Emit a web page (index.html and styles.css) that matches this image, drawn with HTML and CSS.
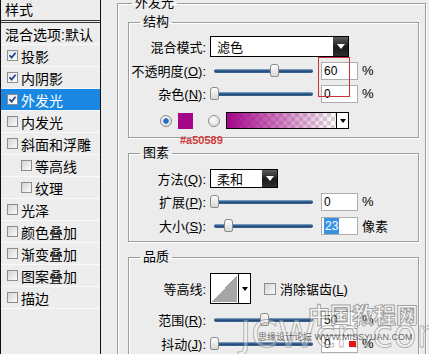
FILE: index.html
```html
<!DOCTYPE html>
<html lang="zh-CN">
<head>
    <meta charset="UTF-8">
    <meta name="viewport" content="width=device-width, initial-scale=1.0">
    <title>图层样式 - 外发光</title>
    <link rel="stylesheet" href="styles.css">
</head>
<body>
    <div class="dialog">
        <div class="sidebar">
            <div class="side-title">样式</div>
            <div class="side-item plain">混合选项:默认</div>
            <div class="side-item"><span class="check on"><svg viewBox="0 0 9 9"><path d="M1.5 4.2 L3.6 6.6 L7.6 1.8"/></svg></span>投影</div>
            <div class="side-item"><span class="check on"><svg viewBox="0 0 9 9"><path d="M1.5 4.2 L3.6 6.6 L7.6 1.8"/></svg></span>内阴影</div>
            <div class="side-item active"><span class="check on"><svg viewBox="0 0 9 9"><path d="M1.5 4.2 L3.6 6.6 L7.6 1.8"/></svg></span>外发光</div>
            <div class="side-item"><span class="check"></span>内发光</div>
            <div class="side-item"><span class="check"></span>斜面和浮雕</div>
            <div class="side-item sub"><span class="check"></span>等高线</div>
            <div class="side-item sub"><span class="check"></span>纹理</div>
            <div class="side-item"><span class="check"></span>光泽</div>
            <div class="side-item"><span class="check"></span>颜色叠加</div>
            <div class="side-item"><span class="check"></span>渐变叠加</div>
            <div class="side-item"><span class="check"></span>图案叠加</div>
            <div class="side-item"><span class="check"></span>描边</div>
        </div>

        <div class="main">
            <fieldset class="group outer">
                <legend>外发光</legend>

                <fieldset class="group structure">
                    <legend>结构</legend>
                    <div class="row">
                        <span class="label">混合模式:</span>
                        <div class="select wide"><span class="select-text">滤色</span><span class="select-btn"><i class="arrow-white"></i></span></div>
                    </div>
                    <div class="slider-rows">
                        <div class="row">
                            <span class="label">不透明度(<u>O</u>):</span>
                            <div class="slider"><span class="track"></span><span class="thumb" style="left: 60px"></span></div>
                            <span class="field">60</span>
                            <span class="unit">%</span>
                        </div>
                        <div class="row">
                            <span class="label">杂色(<u>N</u>):</span>
                            <div class="slider"><span class="track"></span><span class="thumb" style="left: 0px"></span></div>
                            <span class="field">0</span>
                            <span class="unit">%</span>
                        </div>
                        <span class="mark-box"></span>
                    </div>
                    <div class="color-row">
                        <span class="radio on"></span>
                        <span class="swatch"></span>
                        <span class="radio"></span>
                        <div class="gradient"><span class="gradient-fill"></span><span class="drop"><i class="arrow-black"></i></span></div>
                        <span class="hex-note">#a50589</span>
                    </div>
                </fieldset>

                <fieldset class="group elements">
                    <legend>图素</legend>
                    <div class="row">
                        <span class="label">方法(<u>Q</u>):</span>
                        <div class="select narrow"><span class="select-text">柔和</span><span class="select-btn"><i class="arrow-white"></i></span></div>
                    </div>
                    <div class="row gap-a">
                        <span class="label">扩展(<u>P</u>):</span>
                        <div class="slider"><span class="track"></span><span class="thumb" style="left: 0px"></span></div>
                        <span class="field">0</span>
                        <span class="unit">%</span>
                    </div>
                    <div class="row gap-b">
                        <span class="label">大小(<u>S</u>):</span>
                        <div class="slider"><span class="track"></span><span class="thumb" style="left: 14px"></span></div>
                        <span class="field"><span class="selected">23</span></span>
                        <span class="unit">像素</span>
                    </div>
                </fieldset>

                <fieldset class="group quality">
                    <legend>品质</legend>
                    <div class="row">
                        <span class="label">等高线:</span>
                        <div class="contour"><span class="contour-preview"></span><span class="drop"><i class="arrow-black"></i></span></div>
                        <span class="check"></span>
                        <span class="check-label">消除锯齿(<u>L</u>)</span>
                    </div>
                    <div class="row gap-c">
                        <span class="label">范围(<u>R</u>):</span>
                        <div class="slider"><span class="track"></span><span class="thumb" style="left: 50px"></span></div>
                        <span class="field">50</span>
                        <span class="unit">%</span>
                    </div>
                    <div class="row gap-b">
                        <span class="label">抖动(<u>J</u>):</span>
                        <div class="slider"><span class="track"></span><span class="thumb" style="left: 0px"></span></div>
                        <span class="field">0</span>
                        <span class="unit">%</span>
                    </div>
                </fieldset>
            </fieldset>
        </div>

        <!-- site watermark over the corner -->
        <div class="wm-cn">中国教程网</div>
        <div class="wm-en">JCWcn.com</div>
        <div class="wm-site">思缘设计论坛 WWW.MISSYUAN.COM</div>
        <span class="wm-dot"></span>
    </div>
</body>
</html>
```

FILE: styles.css
```css
html, body {
    margin: 0;
    padding: 0;
}
body {
    font-family: "Liberation Sans", "Noto Sans CJK SC", sans-serif;
    font-size: 13px;
    color: #000;
    background-color: #ececec;
    width: 429px;
    height: 354px;
    overflow: hidden;
}
.dialog {
    position: relative;
    display: flex;
    height: 354px;
    overflow: hidden;
}

/* left style list */
.sidebar {
    width: 99px;
    flex: none;
    border-left: 1px solid #111;
    border-right: 1px solid #111;
    background-color: #ededed;
    font-size: 14px;
}
.side-title {
    height: 20px;
    line-height: 20px;
    padding-left: 4px;
    border-bottom: 3px double #333;
}
.side-item {
    display: flex;
    align-items: center;
    height: 21px;
    padding-left: 6px;
    border-bottom: 1px solid #f9f9f9;
    white-space: nowrap;
}
.side-item.plain {
    padding-left: 4px;
}
.side-item.sub {
    padding-left: 20px;
}
.side-item.active {
    background-color: #1a88e2;
    color: #fff;
}
.check {
    display: inline-flex;
    flex: none;
    width: 11px;
    height: 11px;
    box-sizing: border-box;
    margin-right: 3px;
    border: 1px solid #8d8d8d;
    background: linear-gradient(135deg, #d4d4d4, #fbfbfb);
}
.check.on {
    background: linear-gradient(135deg, #e6e6e6, #fff);
}
.check svg {
    width: 9px;
    height: 9px;
}
.check path {
    fill: none;
    stroke: #24408e;
    stroke-width: 1.7;
}

/* right panel */
.main {
    flex: 1;
    padding: 0 3px 0 16px;
}
.group {
    margin: 0;
    padding: 0;
    min-width: 0;
    border: 1px solid #9c9c9c;
    box-shadow: inset 1px 1px 0 #fff, 1px 1px 0 #fff;
}
.group legend {
    margin-left: 11px;
    padding: 0 3px;
    font-size: 13px;
    line-height: 14px;
    height: 14px;
}
.outer {
    margin-top: -4px;
    padding: 0 6px 0 10px;
    height: 400px;
}
.outer > legend {
    margin-left: 4px;
}
.structure {
    margin-top: 5px;
    padding: 7px 0 8px;
}
.elements {
    margin-top: 8px;
    padding: 9px 0 6px;
}
.quality {
    margin-top: 8px;
    padding: 9px 0 10px;
}

.row {
    display: flex;
    align-items: center;
    white-space: nowrap;
}
.slider-rows {
    position: relative;
    display: flex;
    flex-direction: column;
    gap: 4px;
    margin-top: 4px;
}
.gap-a {
    margin-top: 4px;
}
.gap-b {
    margin-top: 5px;
}
.gap-c {
    margin-top: 6px;
}
.label {
    width: 77px;
    margin-right: 4px;
    text-align: right;
    flex: none;
}

.select {
    display: flex;
    box-sizing: border-box;
    border: 1px solid #000;
    background-color: #fff;
}
.select.wide {
    width: 139px;
    height: 21px;
}
.select.narrow {
    width: 68px;
    height: 19px;
}
.select-text {
    flex: 1;
    padding-left: 6px;
    display: flex;
    align-items: center;
}
.select-btn {
    width: 15px;
    display: flex;
    align-items: center;
    justify-content: center;
    background: linear-gradient(#5c5c5c, #1a1a1a 55%, #2e2e2e);
}
.arrow-white {
    width: 0;
    height: 0;
    border-left: 4px solid transparent;
    border-right: 4px solid transparent;
    border-top: 5px solid #fff;
}
.arrow-black {
    width: 0;
    height: 0;
    border-left: 3px solid transparent;
    border-right: 3px solid transparent;
    border-top: 4px solid #000;
}

.slider {
    position: relative;
    width: 104px;
    height: 14px;
    margin-right: 7px;
    flex: none;
}
.track {
    position: absolute;
    left: 4px;
    right: 1px;
    top: 5px;
    height: 4px;
    border-radius: 2px;
    background: linear-gradient(#8fb6dc, #1f4372 50%, #3d6b9c);
}
.thumb {
    position: absolute;
    top: 0;
    width: 9px;
    height: 13px;
    box-sizing: border-box;
    border: 1px solid #8b8b8b;
    border-radius: 3px 3px 2px 2px;
    background: linear-gradient(#fdfdfd, #d8d8d8);
}
.field {
    display: flex;
    align-items: center;
    width: 37px;
    height: 18px;
    box-sizing: border-box;
    padding-left: 2px;
    border: 1px solid #adadad;
    background-color: #fff;
    font-size: 12px;
    flex: none;
}
.selected {
    background-color: #3892e4;
    color: #fff;
    padding: 1px 1px;
}
.unit {
    margin-left: 4px;
}

/* colour choice */
.color-row {
    position: relative;
    display: flex;
    align-items: center;
    margin-top: 9px;
    padding-left: 31px;
    height: 17px;
}
.radio {
    width: 12px;
    height: 12px;
    box-sizing: border-box;
    border-radius: 50%;
    border: 1px solid #8e8e8e;
    background: radial-gradient(circle at 40% 35%, #ffffff, #d2d2d2);
    flex: none;
}
.radio.on {
    background:
        radial-gradient(circle, #2a6cc0 0 2.4px, #9cc4ec 2.8px, transparent 3.4px),
        radial-gradient(circle at 40% 35%, #ffffff, #d2d2d2);
}
.swatch {
    width: 15px;
    height: 16px;
    margin: 0 15px 0 6px;
    background-color: #a50589;
    flex: none;
}
.gradient {
    display: flex;
    width: 123px;
    height: 17px;
    margin-left: 6px;
    box-sizing: border-box;
    border: 1px solid #000;
}
.gradient-fill {
    flex: 1;
    background:
        linear-gradient(to right, #a50589, rgba(165, 5, 137, 0.15) 85%, rgba(165, 5, 137, 0)),
        repeating-conic-gradient(#d6d6d6 0 25%, #fff 0 50%) 0 0 / 8px 8px;
}
.drop {
    width: 11px;
    display: flex;
    align-items: center;
    justify-content: center;
    border-left: 1px solid #000;
    background-color: #fff;
}
.hex-note {
    position: absolute;
    left: 51px;
    top: 22px;
    font-size: 11px;
    font-weight: bold;
    color: #d23a3a;
}
.mark-box {
    position: absolute;
    left: 189px;
    top: -4px;
    width: 32px;
    height: 40px;
    box-sizing: border-box;
    border: 1px solid #c9323a;
}

/* quality */
.contour {
    display: flex;
    width: 41px;
    height: 31px;
    box-sizing: border-box;
    border: 1px solid #000;
    background-color: #fff;
    margin-right: 13px;
}
.contour-preview {
    flex: 1;
    margin: 1px;
    background: linear-gradient(to bottom right, #fff 50%, #a6a6a6 50%);
}
.contour + .check {
    width: 12px;
    height: 12px;
    margin-right: 4px;
}

/* watermark */
.wm-cn {
    position: absolute;
    left: 308px;
    top: 300px;
    font-family: "Noto Sans CJK SC", sans-serif;
    font-size: 22px;
    font-weight: bold;
    line-height: 26px;
    color: rgba(255, 255, 255, 0.55);
    -webkit-text-stroke: 1px rgba(90, 90, 90, 0.55);
}
.wm-en {
    position: absolute;
    left: 240px;
    top: 312px;
    font-family: "DejaVu Sans", sans-serif;
    font-size: 38px;
    line-height: 44px;
    color: rgba(255, 255, 255, 0.35);
    -webkit-text-stroke: 1px rgba(100, 100, 100, 0.45);
}
.wm-site {
    position: absolute;
    left: 258px;
    top: 332px;
    font-size: 9px;
    line-height: 11px;
    color: rgba(40, 40, 40, 0.7);
    white-space: nowrap;
}
.wm-dot {
    position: absolute;
    left: 349px;
    top: 341px;
    width: 7px;
    height: 6px;
    background-color: #e41414;
}
```
